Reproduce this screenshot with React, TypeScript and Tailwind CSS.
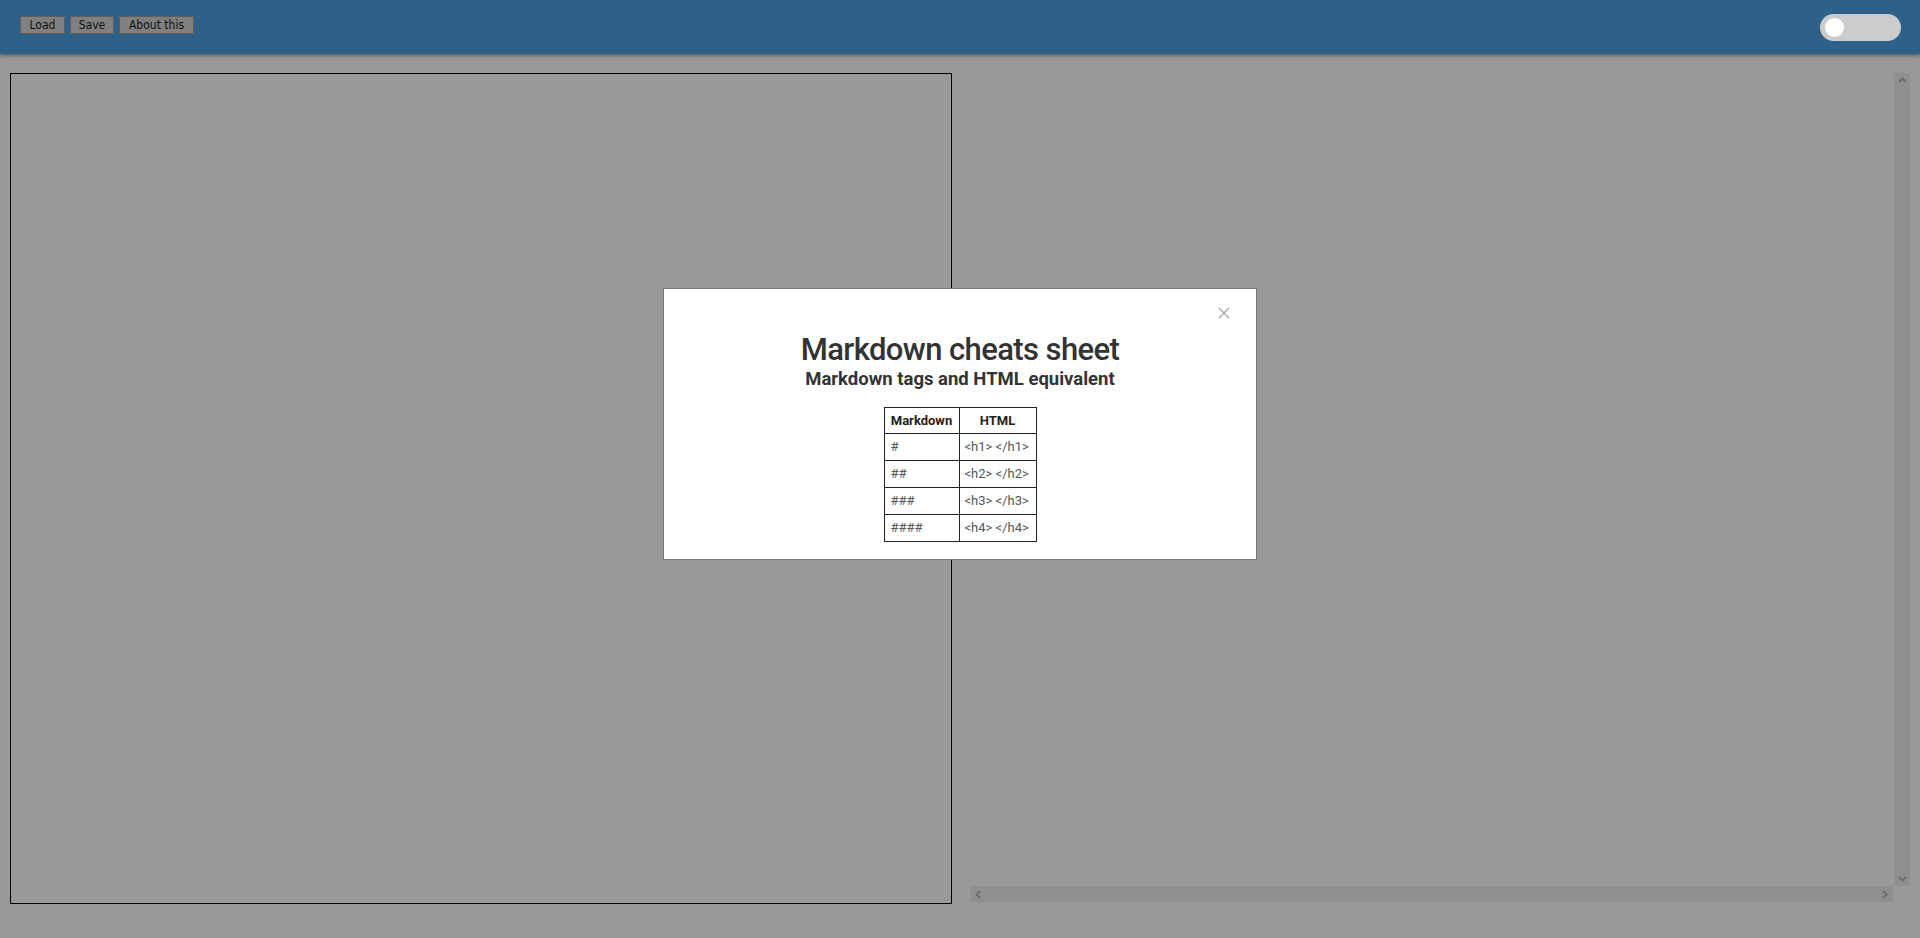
import React from "react";

export default function App() {
  const rows = [
    ["#", "<h1> </h1>"],
    ["##", "<h2> </h2>"],
    ["###", "<h3> </h3>"],
    ["####", "<h4> </h4>"],
  ];
  return (
    <div className="relative w-[1920px] h-[938px] overflow-hidden bg-[#999999]" style={{ fontFamily: "Roboto, sans-serif" }}>
      <header className="h-[54px] bg-[#2e6189] shadow-[0_2px_3px_rgba(0,0,0,0.35)] flex items-center justify-between pl-[20px] pr-[19px] relative z-10">
        <div className="flex gap-[5px] -mt-[4px]" style={{ fontFamily: '"DejaVu Sans Condensed", "DejaVu Sans", Tahoma, sans-serif' }}>
          <button className="h-[18px] w-[45px] bg-[#808080] border border-[#5e5e5e] text-[12px] leading-none text-[#111]">Load</button>
          <button className="h-[18px] w-[44px] bg-[#808080] border border-[#5e5e5e] text-[12px] leading-none text-[#111]">Save</button>
          <button className="h-[18px] w-[75px] bg-[#808080] border border-[#5e5e5e] text-[12px] leading-none text-[#111]">About this</button>
        </div>
        <div className="w-[81px] h-[27px] rounded-full bg-[#cccccc] flex items-center pl-[5px]">
          <div className="w-[19px] h-[19px] rounded-full bg-white" />
        </div>
      </header>
      <main className="flex pt-[19px] pl-[10px] gap-[18px]">
        <div className="w-[942px] h-[831px] border border-black" />
        <div className="w-[940px] h-[829px] relative flex flex-col">
          <div className="flex flex-1">
            <div className="flex-1" />
            <div className="w-[16px] bg-[#8f8f8f] flex flex-col items-center justify-between py-[4px]">
              <svg width="9" height="6" viewBox="0 0 9 6"><path d="M1 5 L4.5 1.5 L8 5" stroke="#6e6e6e" strokeWidth="2" fill="none" /></svg>
              <svg width="9" height="6" viewBox="0 0 9 6"><path d="M1 1 L4.5 4.5 L8 1" stroke="#6e6e6e" strokeWidth="2" fill="none" /></svg>
            </div>
          </div>
          <div className="flex h-[16px]">
            <div className="flex-1 bg-[#8f8f8f] flex items-center justify-between px-[5px] mr-[1px]">
              <svg width="6" height="9" viewBox="0 0 6 9"><path d="M5 1 L1.5 4.5 L5 8" stroke="#6e6e6e" strokeWidth="2" fill="none" /></svg>
              <svg width="6" height="9" viewBox="0 0 6 9"><path d="M1 1 L4.5 4.5 L1 8" stroke="#6e6e6e" strokeWidth="2" fill="none" /></svg>
            </div>
            <div className="w-[16px]" />
          </div>
        </div>
      </main>
      <div className="absolute left-[663px] top-[288px] w-[594px] h-[272px] bg-white border border-[#7a7a7a] z-20">
        <button className="absolute left-[554px] top-[18px] w-[12px] h-[12px]">
          <svg width="12" height="12" viewBox="0 0 12 12"><path d="M1 1 L11 11 M11 1 L1 11" stroke="#a3a3a3" strokeWidth="1.3" /></svg>
        </button>
        <div className="flex flex-col items-center pt-[43px] text-[#333333]">
          <h1 className="text-[31px] font-medium leading-[36px] tracking-[-0.6px]">Markdown cheats sheet</h1>
          <h2 className="text-[18.5px] font-bold leading-[22px]">Markdown tags and HTML equivalent</h2>
          <table className="mt-[17px] border-collapse text-[13px] table-fixed w-[152px]">
            <thead>
              <tr className="h-[26px]">
                <th className="border border-[#222] w-[75px] px-0 font-bold text-[#222] text-center">Markdown</th>
                <th className="border border-[#222] w-[77px] px-0 font-bold text-[#222] text-center">HTML</th>
              </tr>
            </thead>
            <tbody>
              {rows.map(([a, b]) => (
                <tr key={a} className="h-[27px]">
                  <td className="border border-[#222] pl-[6px] pr-0 text-[#555] text-left whitespace-nowrap">{a}</td>
                  <td className="border border-[#222] pl-[5px] pr-0 text-[#555] text-left whitespace-nowrap">{b}</td>
                </tr>
              ))}
            </tbody>
          </table>
        </div>
      </div>
    </div>
  );
}
